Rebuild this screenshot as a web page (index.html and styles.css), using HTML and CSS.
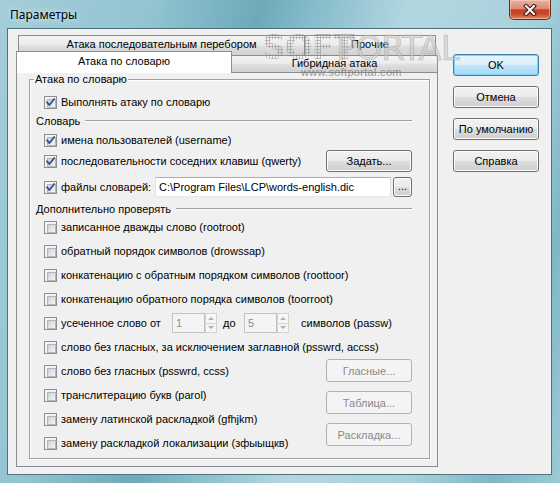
FILE: index.html
```html
<!DOCTYPE html>
<html lang="ru">
<head>
<meta charset="utf-8">
<title>Параметры</title>
<link rel="stylesheet" href="styles.css">
</head>
<body>
<div class="frame">
  <div class="titlebar">
    <span class="title">Параметры</span>
    <div class="close">
      <svg width="14" height="12" viewBox="0 0 14 12">
        <path d="M3 2 L11 10 M11 2 L3 10" stroke="#3b1008" stroke-width="4" stroke-linecap="square" fill="none"/>
        <path d="M3 2 L11 10 M11 2 L3 10" stroke="#ffffff" stroke-width="2" stroke-linecap="square" fill="none"/>
      </svg>
    </div>
  </div>
  <div class="clientwrap">
    <div class="client">
      <div class="tabs">
        <div class="tabrow upper">
          <div class="tab t-brute">Атака последовательным перебором</div>
          <div class="tab t-other">Прочие</div>
        </div>
        <div class="tabrow lower">
          <div class="tab active t-dict">Атака по словарю</div>
          <div class="tab t-hybrid">Гибридная атака</div>
        </div>
        <div class="panel">
          <div class="group">
            <div class="group-title">Атака по словарю</div>

            <div class="row r-first"><span class="cb on"><svg viewBox="0 0 11 11"><path d="M2 5.3 L4.4 8 L9.2 2"/></svg></span><span>Выполнять атаку по словарю</span></div>

            <div class="section s-dict"><span>Словарь</span></div>

            <div class="row r-names"><span class="cb on"><svg viewBox="0 0 11 11"><path d="M2 5.3 L4.4 8 L9.2 2"/></svg></span><span>имена пользователей (username)</span></div>

            <div class="row r-seq"><span class="cb on"><svg viewBox="0 0 11 11"><path d="M2 5.3 L4.4 8 L9.2 2"/></svg></span><span>последовательности соседних клавиш (qwerty)</span><span class="btn btn-set">Задать...</span></div>

            <div class="row r-files"><span class="cb on"><svg viewBox="0 0 11 11"><path d="M2 5.3 L4.4 8 L9.2 2"/></svg></span><span class="lbl-files">файлы словарей:</span><span class="edit">C:\Program Files\LCP\words-english.dic</span><span class="btn btn-browse">...</span></div>

            <div class="section s-extra"><span>Дополнительно проверять</span></div>

            <div class="row"><span class="cb"></span><span>записанное дважды слово (rootroot)</span></div>
            <div class="row"><span class="cb"></span><span>обратный порядок символов (drowssap)</span></div>
            <div class="row"><span class="cb"></span><span>конкатенацию с обратным порядком символов (roottoor)</span></div>
            <div class="row"><span class="cb"></span><span>конкатенацию обратного порядка символов (toorroot)</span></div>
            <div class="row"><span class="cb"></span><span class="lbl-trunc">усеченное слово от</span>
              <span class="spin"><span class="spin-edit">1</span><span class="spin-arrows"><span class="arr up"></span><span class="arr down"></span></span></span>
              <span class="lbl-to">до</span>
              <span class="spin"><span class="spin-edit">5</span><span class="spin-arrows"><span class="arr up"></span><span class="arr down"></span></span></span>
              <span class="lbl-sym">символов (passw)</span>
            </div>
            <div class="row"><span class="cb"></span><span>слово без гласных, за исключением заглавной (psswrd, accss)</span></div>

            <div class="lower-block">
              <div class="lower-rows">
                <div class="row"><span class="cb"></span><span>слово без гласных (psswrd, ccss)</span></div>
                <div class="row"><span class="cb"></span><span>транслитерацию букв (parol)</span></div>
                <div class="row"><span class="cb"></span><span>замену латинской раскладкой (gfhjkm)</span></div>
                <div class="row"><span class="cb"></span><span>замену раскладкой локализации (зфыыщкв)</span></div>
              </div>
              <div class="lower-btns">
                <span class="btn disabled">Гласные...</span>
                <span class="btn disabled">Таблица...</span>
                <span class="btn disabled">Раскладка...</span>
              </div>
            </div>
          </div>
        </div>
      </div>
      <div class="side-buttons">
        <span class="btn default">OK</span>
        <span class="btn">Отмена</span>
        <span class="btn">По умолчанию</span>
        <span class="btn">Справка</span>
      </div>
    </div>
  </div>
  <div class="watermark">
    <span class="wm-soft">SOFT</span><span class="wm-portal">PORTAL</span>
    <span class="wm-url">www.softportal.com</span>
  </div>
</div>
</body>
</html>
```
FILE: styles.css
```css
* { box-sizing: border-box; }
html, body { margin: 0; padding: 0; }
body {
  width: 560px; height: 483px; overflow: hidden;
  font-family: "Liberation Sans", Arial, sans-serif;
  font-size: 11px; color: #000;
}
.frame {
  position: relative;
  width: 560px; height: 483px;
  display: flex; flex-direction: column;
  background: linear-gradient(105deg, #a3cdd9 0%, #93c4d2 22%, #6ea9ba 38%, #86bccb 46%, #b3d7e1 60%, #a9d1dc 78%, #7fb7c7 90%, #9ccad6 100%);
}
.titlebar {
  height: 28px; flex: none;
  display: flex; align-items: flex-start;
  padding: 0 9px 0 10px;
}
.title {
  margin-top: 8px;
  font-family: "Noto Sans", "DejaVu Sans", sans-serif;
  font-size: 12px; line-height: 14px; color: #000;
  text-shadow: 0 0 6px rgba(255,255,255,0.9);
}
.close {
  margin-left: auto;
  width: 42px; height: 20px;
  border: 1px solid #6a2a1c; border-top: none;
  border-radius: 0 0 5px 5px;
  background: linear-gradient(#e9b1a3 0%, #dc8a75 45%, #c84024 52%, #c94a2e 75%, #e28a63 100%);
  box-shadow: inset 0 0 0 1px rgba(255,220,200,0.5);
  display: flex; align-items: center; justify-content: center;
}
.clientwrap {
  flex: 1;
  padding: 0 8px 8px 7px;
}
.client {
  height: 100%;
  border: 1px solid #4f727d;
  background: #f0f0f0;
  display: flex; align-items: flex-start;
}

/* tabs */
.tabs {
  margin: 6px 0 0 8px;
  width: 422px;
  display: flex; flex-direction: column;
}
.tabrow { display: flex; }
.tab {
  border: 1px solid #898c95; border-bottom: none;
  text-align: center; line-height: 13px;
  background: linear-gradient(#f3f3f3 0%, #ececec 45%, #dedede 55%, #d2d2d2 100%);
  white-space: nowrap;
}
.upper { height: 20px; padding-left: 2px; }
.upper .tab { height: 20px; padding-top: 2px; }
.t-brute { width: 287px; }
.t-other { width: 131px; border-left: none; }
.lower { height: 21px; margin-top: -4px; align-items: flex-start; }
.t-dict {
  position: relative; z-index: 1;
  width: 216px; height: 22px; padding-top: 3px;
  background: #ffffff;
}
.t-hybrid {
  width: 206px; height: 17px; margin-top: 4px; padding-top: 1px;
  border-left: none;
}
.panel {
  height: 395px;
  border: 1px solid #898c95;
  background: #f0f0f0;
  display: flex; flex-direction: column;
  padding: 6px 7px 7px 12px;
}

/* group box */
.group {
  flex: 1;
  border: 1px solid #a0a0a0;
  box-shadow: inset 1px 1px 0 #fff, 1px 1px 0 #fff;
  display: flex; flex-direction: column;
  padding: 0 17px 0 6px;
}
.group-title {
  align-self: flex-start;
  margin: -7px 0 0 -2px;
  padding: 0 1px;
  line-height: 13px;
  background: #f0f0f0;
}
.row {
  display: flex; align-items: center;
  height: 24px; flex: none;
  padding-left: 8px;
  white-space: nowrap;
}
.r-first { height: 20px; margin-top: 6px; }
.r-names { height: 20px; }
.r-seq { height: 22px; }
.r-files { height: 30px; }
.section {
  display: flex; align-items: center; flex: none;
  height: 18px;
}
.s-extra { height: 13px; }
.section::after {
  content: ""; flex: 1;
  margin-left: 5px;
  border-top: 1px solid #a0a0a0;
  border-bottom: 1px solid #fff;
}

/* checkbox */
.cb {
  position: relative; flex: none;
  width: 13px; height: 13px;
  margin-right: 4px;
  border: 1px solid #8f8f8f;
  background: #f4f4f4;
  padding: 2px;
}
.cb::before {
  content: ""; display: block;
  width: 7px; height: 7px;
  border: 1px solid #b2b6bb;
  background: linear-gradient(135deg, #cdd1d6 0%, #e6e7e9 60%, #f6f6f6 100%);
}
.cb svg {
  position: absolute; left: 0; top: 0;
  width: 11px; height: 11px;
}
.cb svg path {
  fill: none; stroke: #3a5397; stroke-width: 1.9;
  stroke-linecap: round; stroke-linejoin: round;
}

/* buttons */
.btn {
  display: flex; align-items: center; justify-content: center;
  height: 22px; width: 86px; flex: none;
  border: 1px solid #707070; border-radius: 3px;
  background: linear-gradient(#f2f2f2 0%, #ebebeb 48%, #dddddd 52%, #cfcfcf 100%);
  box-shadow: inset 0 0 0 1px #fbfbfb;
  white-space: nowrap;
}
.btn.default {
  border-color: #3c7fb1;
  background: linear-gradient(#eaf6fd 0%, #d9f0fc 48%, #bee6fd 52%, #a7d9f5 100%);
  box-shadow: inset 0 0 0 1px #7ed3f5;
}
.btn.disabled {
  border-color: #adb2b5;
  background: #f4f4f4;
  box-shadow: none;
  color: #8a8a8a;
  height: 23px;
}
.btn-set { margin-left: auto; }
.btn-browse { width: 19px; height: 20px; padding-bottom: 3px; }
.lbl-files { width: 94px; flex: none; }
.edit {
  flex: 1; height: 20px;
  margin-right: 2px;
  border: 1px solid #abadb3;
  border-color: #abadb3 #dbdfe6 #e3e9ef #e2e3ea;
  background: #fff;
  padding-left: 3px;
  display: flex; align-items: center;
}

/* spinners */
.lbl-trunc { width: 111px; flex: none; }
.spin { display: flex; height: 20px; flex: none; }
.spin-edit {
  width: 33px; height: 20px;
  border: 1px solid #c3c3c3;
  background: #f4f4f4;
  color: #8d8d8d;
  padding-left: 3px;
  display: flex; align-items: center;
}
.spin-arrows { display: flex; flex-direction: column; width: 12px; height: 20px; }
.arr {
  flex: 1; position: relative;
  border: 1px solid #d3d3d3;
  background: #f6f6f6;
  display: flex; align-items: center; justify-content: center;
}
.arr.down { border-top: none; }
.arr::before {
  content: ""; width: 0; height: 0;
  border-left: 3px solid transparent; border-right: 3px solid transparent;
}
.arr.up::before { border-bottom: 3px solid #b0b0b0; }
.arr.down::before { border-top: 3px solid #b0b0b0; }
.lbl-to { width: 27px; flex: none; padding-left: 6px; }
.lbl-sym { margin-left: 12px; }

.lower-block { display: flex; flex: none; }
.lower-rows { flex: 1; }
.lower-btns { display: flex; flex-direction: column; gap: 9px; width: 86px; }

/* side buttons */
.side-buttons {
  margin: 25px 0 0 15px;
  display: flex; flex-direction: column; gap: 10px;
}

/* watermark overlay */
.watermark {
  position: absolute; left: 262px; top: 30px;
  width: 190px; height: 50px;
  pointer-events: none;
}
.wm-soft {
  position: absolute; left: 0; top: 0;
  font-family: "DejaVu Sans", sans-serif; font-weight: bold;
  font-size: 33px; line-height: 36px; letter-spacing: -1px;
  color: transparent;
  background: radial-gradient(circle, rgba(140,140,140,0.75) 0.9px, transparent 1.2px) 0 0 / 3px 3px;
  -webkit-background-clip: text; background-clip: text;
}
.wm-portal {
  position: absolute; left: 74px; top: 0;
  font-family: "DejaVu Sans", sans-serif;
  font-size: 34px; line-height: 36px; letter-spacing: -1px;
  color: rgba(200,200,200,0.55);
  -webkit-text-stroke: 0.6px rgba(150,150,150,0.6);
}
.wm-url {
  position: absolute; left: 39px; top: 36px;
  font-size: 11px; line-height: 12px; letter-spacing: 0.3px;
  color: rgba(110,110,110,0.7);
}
```
